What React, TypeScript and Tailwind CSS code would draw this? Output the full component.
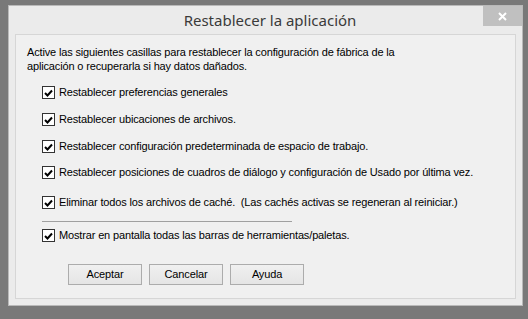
import React from 'react'

const options = [
  'Restablecer preferencias generales',
  'Restablecer ubicaciones de archivos.',
  'Restablecer configuración predeterminada de espacio de trabajo.',
  'Restablecer posiciones de cuadros de diálogo y configuración de Usado por última vez.',
  'Eliminar todos los archivos de caché.  (Las cachés activas se regeneran al reiniciar.)',
]

function Check({ label, className }: { label: string; className?: string }) {
  return (
    <label className={`flex h-[13px] items-center gap-[4px] ${className ?? ''}`}>
      <span className="flex h-[13px] w-[13px] shrink-0 items-center justify-center border border-[#333333] bg-white">
        <svg width="9" height="8" viewBox="0 0 9 8">
          <path d="M1 4 L3.5 6.5 L8 1.5" fill="none" stroke="#000" strokeWidth="2" />
        </svg>
      </span>
      <span className="whitespace-pre leading-[13px]">{label}</span>
    </label>
  )
}

function Btn({ children }: { children: React.ReactNode }) {
  return (
    <button className="flex h-[21px] w-[74px] items-center justify-center border border-[#acacac] bg-gradient-to-b from-[#f0f0f0] to-[#e5e5e5] text-[11px] tracking-[-0.15px] text-black">
      {children}
    </button>
  )
}

export default function App() {
  return (
    <div className="h-[319px] w-[528px] bg-[#797979] pl-[8px] pt-[5px] font-['Liberation_Sans',Arial,sans-serif]">
      <div className="h-[301px] w-[515px] border border-[#b9b9b9] bg-[#ebebeb]">
        <div className="relative flex h-[28px] items-center justify-center pl-[9px]">
          <span className="text-[15px] text-[#3a3a3a] font-['Noto_Sans',sans-serif]">
            Restablecer la aplicación
          </span>
          <div className="absolute right-[0px] top-[0px] flex h-[20px] w-[39px] items-center justify-center bg-[#c0c0c0]">
            <svg width="9" height="9" viewBox="0 0 9 9">
              <path d="M1 1 L8 8 M8 1 L1 8" stroke="#fff" strokeWidth="2" />
            </svg>
          </div>
        </div>
        <div className="mx-[6px] h-[265px] border border-[#d6d6d6] bg-[#f0f0f0] pl-[11px] pt-[10px] text-[11px] tracking-[-0.15px] text-black">
          <p className="leading-[14px]">
            Active las siguientes casillas para restablecer la configuración de fábrica de la
            <br />
            aplicación o recuperarla si hay datos dañados.
          </p>
          <div className="flex flex-col pl-[15px]">
            <Check label={options[0]} className="mt-[13px]" />
            <Check label={options[1]} className="mt-[14px]" />
            <Check label={options[2]} className="mt-[14px]" />
            <Check label={options[3]} className="mt-[13px]" />
            <Check label={options[4]} className="mt-[17px]" />
            <div className="mt-[12px] h-[1px] w-[250px] bg-[#a0a0a0]" />
            <Check label="Mostrar en pantalla todas las barras de herramientas/paletas." className="mt-[7px]" />
            <div className="mt-[22px] flex gap-[7px] pl-[26px]">
              <Btn>Aceptar</Btn>
              <Btn>Cancelar</Btn>
              <Btn>Ayuda</Btn>
            </div>
          </div>
        </div>
      </div>
    </div>
  )
}
